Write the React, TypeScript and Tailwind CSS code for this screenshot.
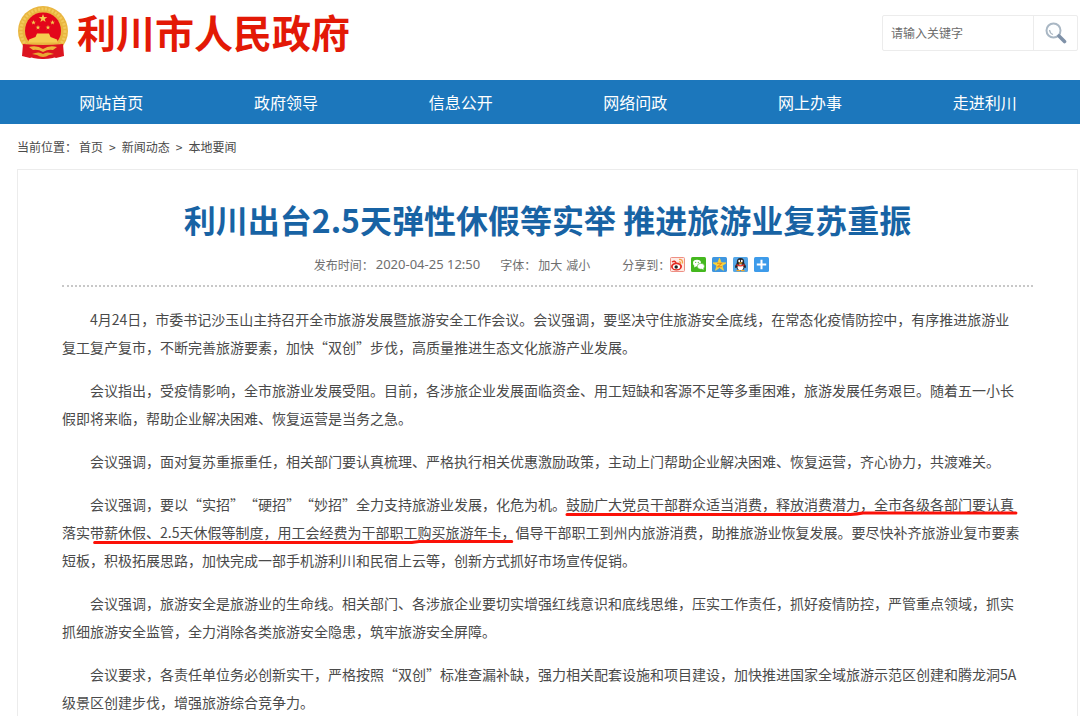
import type { ReactNode } from "react";

const navItems = ["网站首页", "政府领导", "信息公开", "网络问政", "网上办事", "走进利川"];

const STAR = "M0 -5 L1.2 -1.6 L4.8 -1.5 L1.9 0.6 L2.9 4 L0 2 L-2.9 4 L-1.9 0.6 L-4.8 -1.5 L-1.2 -1.6 Z";

function Emblem() {
  return (
    <svg viewBox="0 0 52 56" className="h-14 w-[52px] shrink-0" aria-hidden="true">
      <path d="M7 38 L6 50 Q8 54 12 52 L16 54 Q26 56 36 54 L40 52 Q44 54 46 50 L45 38 Z" fill="#dc1420" />
      <ellipse cx="26" cy="27" rx="25" ry="25" fill="#e9b640" />
      <ellipse cx="26" cy="27" rx="22" ry="22" fill="none" stroke="#f2c95a" strokeWidth="3" strokeDasharray="2 1.500" />
      <path d="M8 27 C8 16 16 8.500 26 8.500 C36 8.500 44 16 44 27 C44 32 42 35 40 38 L12 38 C10 35 8 32 8 27 Z" fill="#e3061b" />
      <g fill="#f5cd50">
        <path d={STAR} transform="translate(26 14.500) scale(.9)" />
        <path d={STAR} transform="translate(16.500 18.500) scale(.5)" />
        <path d={STAR} transform="translate(35.500 18.500) scale(.5)" />
        <path d={STAR} transform="translate(21 23.500) scale(.5)" />
        <path d={STAR} transform="translate(31 23.500) scale(.5)" />
        <path d="M20 29.500 L32 29.500 L33.500 33 L40 35.500 L41 38.500 L11 38.500 L12 35.500 L18.500 33 Z" />
      </g>
      <path d="M6 40 Q26 42 46 40 L47 52 L39 54 L34 52 L26 55 L18 52 L13 54 L5 52 Z" fill="#dc1420" />
      <path d="M12 43 Q20 41 26 45 Q32 41 40 43 L36 46 Q31 45 26 48 Q21 45 16 46 Z" fill="#eeb53c" />
      <path d="M15 50 Q22 47 26 50 Q30 47 37 50 L32 51 Q29 53 26 53 Q23 53 20 51 Z" fill="#e8a932" />
    </svg>
  );
}

function SearchIcon() {
  return (
    <svg viewBox="0 0 22 22" className="h-[22px] w-[22px]" aria-hidden="true">
      <circle cx="8.500" cy="8.500" r="7" fill="#fdfeff" stroke="#a9b7c4" strokeWidth="2" />
      <path d="M4.500 8 Q5 11.500 8 12.500" fill="none" stroke="#aab6c1" strokeWidth="1.300" />
      <path d="M14 14 L19.500 19.500" stroke="#7f91a8" strokeWidth="3.600" strokeLinecap="round" />
    </svg>
  );
}

const shareIcons: { label: string; art: ReactNode }[] = [
  {
    label: "新浪微博",
    art: (
      <>
        <rect x=".5" y=".5" width="14" height="14" rx="1" fill="#fdebe5" stroke="#ee8f84" />
        <ellipse cx="6.500" cy="9.500" rx="5.500" ry="4" fill="#e32d24" />
        <ellipse cx="6.500" cy="9.800" rx="3.700" ry="2.500" fill="#fff" />
        <circle cx="6.200" cy="10" r="1.700" fill="#222" />
        <path d="M2 5 Q5 3 6 6" fill="none" stroke="#e32d24" strokeWidth="1.500" />
        <path d="M9 2.500 Q13 2 12.500 6.500 M9 5 Q11 4.500 10.500 7" fill="none" stroke="#f5a34a" strokeWidth="1.300" />
      </>
    ),
  },
  {
    label: "微信",
    art: (
      <>
        <rect width="15" height="15" rx="1.500" fill="#44b81e" />
        <ellipse cx="6" cy="6" rx="4" ry="3.300" fill="#fff" />
        <path d="M3.500 8 L3 10.500 L6 9 Z" fill="#fff" />
        <ellipse cx="9.900" cy="9.300" rx="3.600" ry="3" fill="#fff" stroke="#44b81e" strokeWidth=".6" />
        <path d="M10.500 11.500 L12.500 13 L12.200 10.500 Z" fill="#fff" />
        <circle cx="4.700" cy="5.300" r=".6" fill="#44b81e" />
        <circle cx="7.300" cy="5.300" r=".6" fill="#44b81e" />
      </>
    ),
  },
  {
    label: "QQ空间",
    art: (
      <>
        <rect width="15" height="15" rx="1.500" fill="#3e96e0" />
        <path d={STAR} transform="translate(7.500 7.900) scale(1.350)" fill="#fbd33b" stroke="#fbd33b" strokeWidth=".6" strokeLinejoin="round" />
        <path d="M5 6.300 H9.500 L5.800 9.700 H10" fill="none" stroke="#e58a1b" strokeWidth="1.100" />
      </>
    ),
  },
  {
    label: "QQ好友",
    art: (
      <>
        <rect width="15" height="15" rx="1.500" fill="#55a7e8" />
        <path d="M3.800 6 Q3.500 1 7.500 1 Q11.500 1 11.200 6 Q13.500 9 12.800 11 L11.500 10.500 Q11 13.500 7.500 13.500 Q4 13.500 3.500 10.500 L2.200 11 Q1.500 9 3.800 6 Z" fill="#20242c" />
        <ellipse cx="7.500" cy="10.300" rx="2.900" ry="3" fill="#fff" />
        <ellipse cx="6.200" cy="4" rx=".9" ry="1.200" fill="#fff" />
        <ellipse cx="8.800" cy="4" rx=".9" ry="1.200" fill="#fff" />
        <ellipse cx="7.500" cy="6" rx="2" ry=".7" fill="#f5a623" />
        <path d="M3.500 7 Q7.500 9.300 11.500 7 L11.500 8.500 Q7.500 10.500 3.500 8.500 Z" fill="#e5322d" />
        <path d="M3.500 13.600 H7 M8 13.600 H11.500" stroke="#f5a623" strokeWidth="1.400" />
      </>
    ),
  },
  {
    label: "更多",
    art: (
      <>
        <rect width="15" height="15" rx="1.500" fill="#3d9bea" />
        <path d="M7.500 2.800 V12.200 M2.800 7.500 H12.200" stroke="#fff" strokeWidth="2" />
      </>
    ),
  },
];

function Marked({ children, path }: { children: ReactNode; path: string }) {
  return (
    <span className="relative inline-block indent-0">
      {children}
      <svg
        viewBox="0 0 460 6"
        preserveAspectRatio="none"
        className="absolute bottom-px left-0 h-1.5 w-full overflow-visible"
        aria-hidden="true"
      >
        <path d={path} fill="none" stroke="#fb1108" strokeWidth="3" strokeLinecap="round" vectorEffect="non-scaling-stroke" />
      </svg>
    </span>
  );
}

export default function App() {
  return (
    <div className="min-h-screen bg-white font-['Noto_Sans_CJK_SC','Noto_Sans',sans-serif] text-[#4a4a4a]">
      <header className="flex h-20 items-start justify-between pr-0.5 pl-[17px]">
        <a href="#home" className="flex items-start gap-2 pt-1">
          <Emblem />
          <span className="text-[39px] leading-[54px] font-bold text-[#e31906]">利川市人民政府</span>
        </a>
        <form className="mt-[15px] flex h-9 w-[196px] rounded-xs border border-[#ececec]" onSubmit={(e) => e.preventDefault()}>
          <input
            type="text"
            aria-label="搜索关键字"
            placeholder="请输入关键字"
            className="min-w-0 flex-1 px-2 text-xs outline-none placeholder:text-[#6c6c6c]"
          />
          <button type="submit" aria-label="搜索" className="flex w-11 items-center justify-center border-l border-[#ececec]">
            <SearchIcon />
          </button>
        </form>
      </header>

      <nav className="grid h-11 grid-cols-6 items-center bg-[#1c77bc] pr-2 pl-6">
        {navItems.map((item) => (
          <a key={item} href="#nav" className="text-center text-base text-white">
            {item}
          </a>
        ))}
      </nav>

      <div className="flex h-[45px] items-center gap-1.5 pl-[17px] text-xs">
        <div className="flex gap-0.5">
          <span>当前位置：</span>
          <a href="#home">首页</a>
        </div>
        <span>&gt;</span>
        <a href="#news">新闻动态</a>
        <span>&gt;</span>
        <a href="#local">本地要闻</a>
      </div>

      <main className="mr-0.5 ml-[17px] border border-b-0 border-[#ececec] px-11 pt-6">
        <h1 className="text-center text-[32px] leading-[50px] font-bold text-[#1863a4]">
          利川出台2.5天弹性休假等实举 推进旅游业复苏重振
        </h1>
        <div className="flex h-[43px] items-center justify-center border-b-2 border-dotted border-[#c8c8c8] pr-3 text-xs text-[#6e6e6e]">
          <span>发布时间：</span>
          <time className="ml-0.5 font-['Noto_Sans',sans-serif] text-[13px]">2020-04-25 12:50</time>
          <span className="ml-5">字体：</span>
          <button type="button" className="ml-0.5">加大</button>
          <button type="button" className="ml-1">减小</button>
          <span className="ml-8">分享到：</span>
          <div className="flex gap-1.5">
            {shareIcons.map((icon) => (
              <button key={icon.label} type="button" aria-label={icon.label}>
                <svg viewBox="0 0 15 15" className="block h-[15px] w-[15px]" aria-hidden="true">
                  {icon.art}
                </svg>
              </button>
            ))}
          </div>
        </div>

        <article className="flex flex-col gap-[15px] pt-[18px] text-sm leading-7 [text-spacing-trim:space-all] [&>p]:indent-7">
          <p>
            4月24日，市委书记沙玉山主持召开全市旅游发展暨旅游安全工作会议。会议强调，要坚决守住旅游安全底线，在常态化疫情防控中，有序推进旅游业
            <br />
            复工复产复市，不断完善旅游要素，加快“双创”步伐，高质量推进生态文化旅游产业发展。
          </p>
          <p>
            会议指出，受疫情影响，全市旅游业发展受阻。目前，各涉旅企业发展面临资金、用工短缺和客源不足等多重困难，旅游发展任务艰巨。随着五一小长
            <br />
            假即将来临，帮助企业解决困难、恢复运营是当务之急。
          </p>
          <p>会议强调，面对复苏重振重任，相关部门要认真梳理、严格执行相关优惠激励政策，主动上门帮助企业解决困难、恢复运营，齐心协力，共渡难关。</p>
          <p>
            会议强调，要以“实招”“硬招”“妙招”全力支持旅游业发展，化危为机。
            <Marked path="M1 3.500 H292 Q299 3 305 2 H462">鼓励广大党员干部群众适当消费，释放消费潜力，全市各级各部门要认真</Marked>
            <br />
            落实
            <Marked path="M5 3.500 H348 L356 2.500 H456">带薪休假、2.5天休假等制度，用工会经费为干部职工购买旅游年卡，</Marked>
            倡导干部职工到州内旅游消费，助推旅游业恢复发展。要尽快补齐旅游业复市要素
            <br />
            短板，积极拓展思路，加快完成一部手机游利川和民宿上云等，创新方式抓好市场宣传促销。
          </p>
          <p>
            会议强调，旅游安全是旅游业的生命线。相关部门、各涉旅企业要切实增强红线意识和底线思维，压实工作责任，抓好疫情防控，严管重点领域，抓实
            <br />
            抓细旅游安全监管，全力消除各类旅游安全隐患，筑牢旅游安全屏障。
          </p>
          <p>
            会议要求，各责任单位务必创新实干，严格按照“双创”标准查漏补缺，强力相关配套设施和项目建设，加快推进国家全域旅游示范区创建和腾龙洞5A
            <br />
            级景区创建步伐，增强旅游综合竞争力。
          </p>
        </article>
      </main>
    </div>
  );
}
